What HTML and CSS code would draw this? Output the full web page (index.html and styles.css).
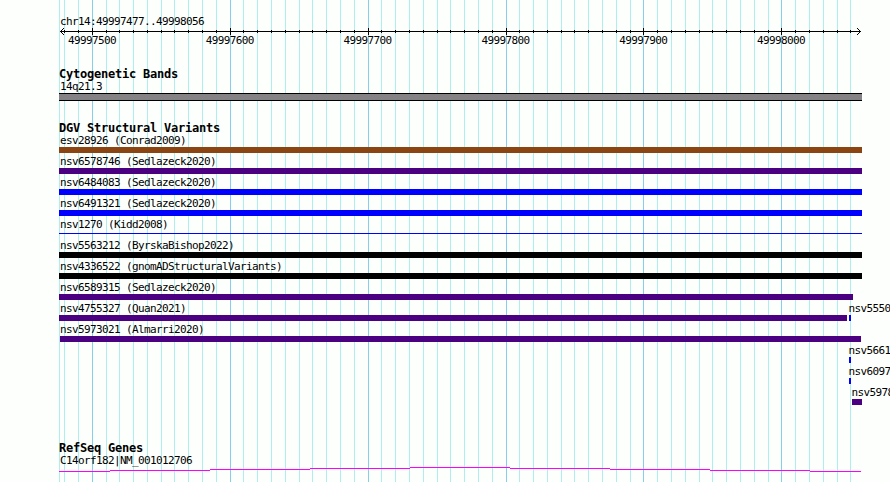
FILE: index.html
```
<!DOCTYPE html>
<html lang="en">
  <head>
    <meta charset="UTF-8"/>
    <title>chr14:49997477..49998056</title>
    <link rel="stylesheet" href="styles.css">
  </head>
  <body>
    <div class="browser">
      <svg class="grid" width="890" height="482" shape-rendering="crispEdges">
        <path id="minor" class="minor"/>
        <path id="major" class="major"/>
      </svg>

      <div class="ruler">
        <div class="label">chr14:49997477..49998056</div>
        <svg class="axis" width="803" height="7" shape-rendering="crispEdges">
          <path d="M1 3h801v1H1z"/>
          <path d="M2 2h1v1h-1zM3 1h1v1h-1zM4 0h1v1h-1zM2 4h1v1h-1zM3 5h1v1h-1zM4 6h1v1h-1z"/>
          <path d="M800 2h1v1h-1zM799 1h1v1h-1zM798 0h1v1h-1zM800 4h1v1h-1zM799 5h1v1h-1zM798 6h1v1h-1z"/>
          <path id="ticks"/>
        </svg>
        <div class="numbers">
          <span>49997500</span>
          <span>49997600</span>
          <span>49997700</span>
          <span>49997800</span>
          <span>49997900</span>
          <span>49998000</span>
        </div>
      </div>

      <div class="track cytoband">
        <div class="title">Cytogenetic Bands</div>
        <div class="label">14q21.3</div>
        <div class="band"></div>
      </div>

      <div class="track variants">
        <div class="title">DGV Structural Variants</div>
        <div class="row"><div class="label">esv28926 (Conrad2009)</div><div class="bar brown"></div></div>
        <div class="row"><div class="label">nsv6578746 (Sedlazeck2020)</div><div class="bar purple"></div></div>
        <div class="row"><div class="label">nsv6484083 (Sedlazeck2020)</div><div class="bar blue"></div></div>
        <div class="row"><div class="label">nsv6491321 (Sedlazeck2020)</div><div class="bar blue"></div></div>
        <div class="row"><div class="label">nsv1270 (Kidd2008)</div><div class="bar blue thin"></div></div>
        <div class="row"><div class="label">nsv5563212 (ByrskaBishop2022)</div><div class="bar black"></div></div>
        <div class="row"><div class="label">nsv4336522 (gnomADStructuralVariants)</div><div class="bar black"></div></div>
        <div class="row"><div class="label">nsv6589315 (Sedlazeck2020)</div><div class="bar purple to-853"></div></div>
        <div class="row pair">
          <div class="first"><div class="label">nsv4755327 (Quan2021)</div><div class="bar purple to-847"></div></div>
          <div class="second"><div class="label">nsv5550</div><div class="bar blue small"></div></div>
        </div>
        <div class="row"><div class="label">nsv5973021 (Almarri2020)</div><div class="bar purple inset"></div></div>
        <div class="row right"><div class="label">nsv5661</div><div class="bar blue small"></div></div>
        <div class="row right"><div class="label">nsv6097</div><div class="bar blue small"></div></div>
        <div class="row right last"><div class="label">nsv5978</div><div class="bar purple end"></div></div>
      </div>

      <div class="track genes">
        <div class="title">RefSeq Genes</div>
        <div class="label">C14orf182|NM_001012706</div>
        <svg class="intron" width="802" height="5" shape-rendering="crispEdges">
          <path d="M0 4.5H51M51 3.5H151M151 2.5H251M251 1.5H351M351 .5H451M451 1.5H551M551 2.5H651M651 3.5H751M751 4.5H802"/>
        </svg>
      </div>
    </div>

    <script>
      var start = 49997477;
      var minor = 'M59 0h1v482h-1z';
      var major = '';
      var ticks = '';
      for (var bp = 49997480; bp <= 49998050; bp += 10) {
        var x = Math.floor(60.5 + (bp - start) * 800 / 580);
        var line = 'M' + x + ' 0h1v482h-1z';
        if (bp % 100 == 0) {
          major += line;
          ticks += 'M' + (x - 59) + ' 0h1v7h-1z';
        } else {
          minor += line;
          ticks += 'M' + (x - 59) + ' 2h1v3h-1z';
        }
      }
      document.getElementById('minor').setAttribute('d', minor);
      document.getElementById('major').setAttribute('d', major);
      document.getElementById('ticks').setAttribute('d', ticks);
    </script>
  </body>
</html>
```
FILE: styles.css
```
body {
  margin: 0;
  background-color: #fdfffc;
  color: #000;
}

.browser {
  position: relative;
  box-sizing: border-box;
  width: 890px;
  height: 482px;
  padding: 15px 0 0 59px;
  overflow: hidden;
}

/* guide lines run behind every track */
.grid {
  position: absolute;
  top: 0;
  left: 0;
  z-index: -1;
}

.minor {
  fill: #afeeee;
}

.major {
  fill: #87ceeb;
}

.label,
.numbers {
  font-family: "DejaVu Sans Mono", monospace;
  font-size: 11px;
  line-height: 13px;
  letter-spacing: -0.622px;
  white-space: nowrap;
}

.label {
  height: 13px;
  padding-left: 1px;
}

.title {
  height: 13px;
  font-family: "DejaVu Sans Mono", monospace;
  font-size: 12px;
  font-weight: bold;
  line-height: 15px;
  letter-spacing: -0.224px;
}

.ruler {
  height: 52px;
}

.axis {
  display: block;
}

.numbers {
  display: flex;
  gap: 89.8px;
  margin-top: -1px;
  padding-left: 9px;
}

.numbers span {
  width: 48px;
}

.cytoband {
  height: 54px;
}

.band {
  box-sizing: border-box;
  width: 803px;
  height: 8px;
  border-top: 1px solid #000;
  border-bottom: 1px solid #000;
  background-color: #848284;
}

.variants {
  height: 320px;
}

.row {
  height: 21px;
}

.bar {
  width: 803px;
  height: 6px;
}

.brown {
  background-color: #8b4513;
}

.purple {
  background-color: #4b0082;
}

.blue {
  background-color: #0000ff;
}

.black {
  background-color: #000;
}

.thin {
  height: 1px;
  margin-top: 2px;
}

.to-853 {
  width: 794px;
}

.to-847 {
  width: 788px;
}

.inset {
  width: 801px;
  margin-left: 1px;
}

.pair {
  display: flex;
}

.first {
  width: 789px;
}

.second,
.right {
  width: 42px;
}

.second .label,
.right .label {
  padding-left: 0.5px;
}

.right {
  margin-left: 789px;
}

.small {
  width: 2px;
  margin-left: 1px;
}

.last {
  margin-left: 792px;
}

.end {
  width: 10px;
  margin-left: 1px;
}

.intron {
  display: block;
}

.intron path {
  stroke: #ff00ff;
}
```
